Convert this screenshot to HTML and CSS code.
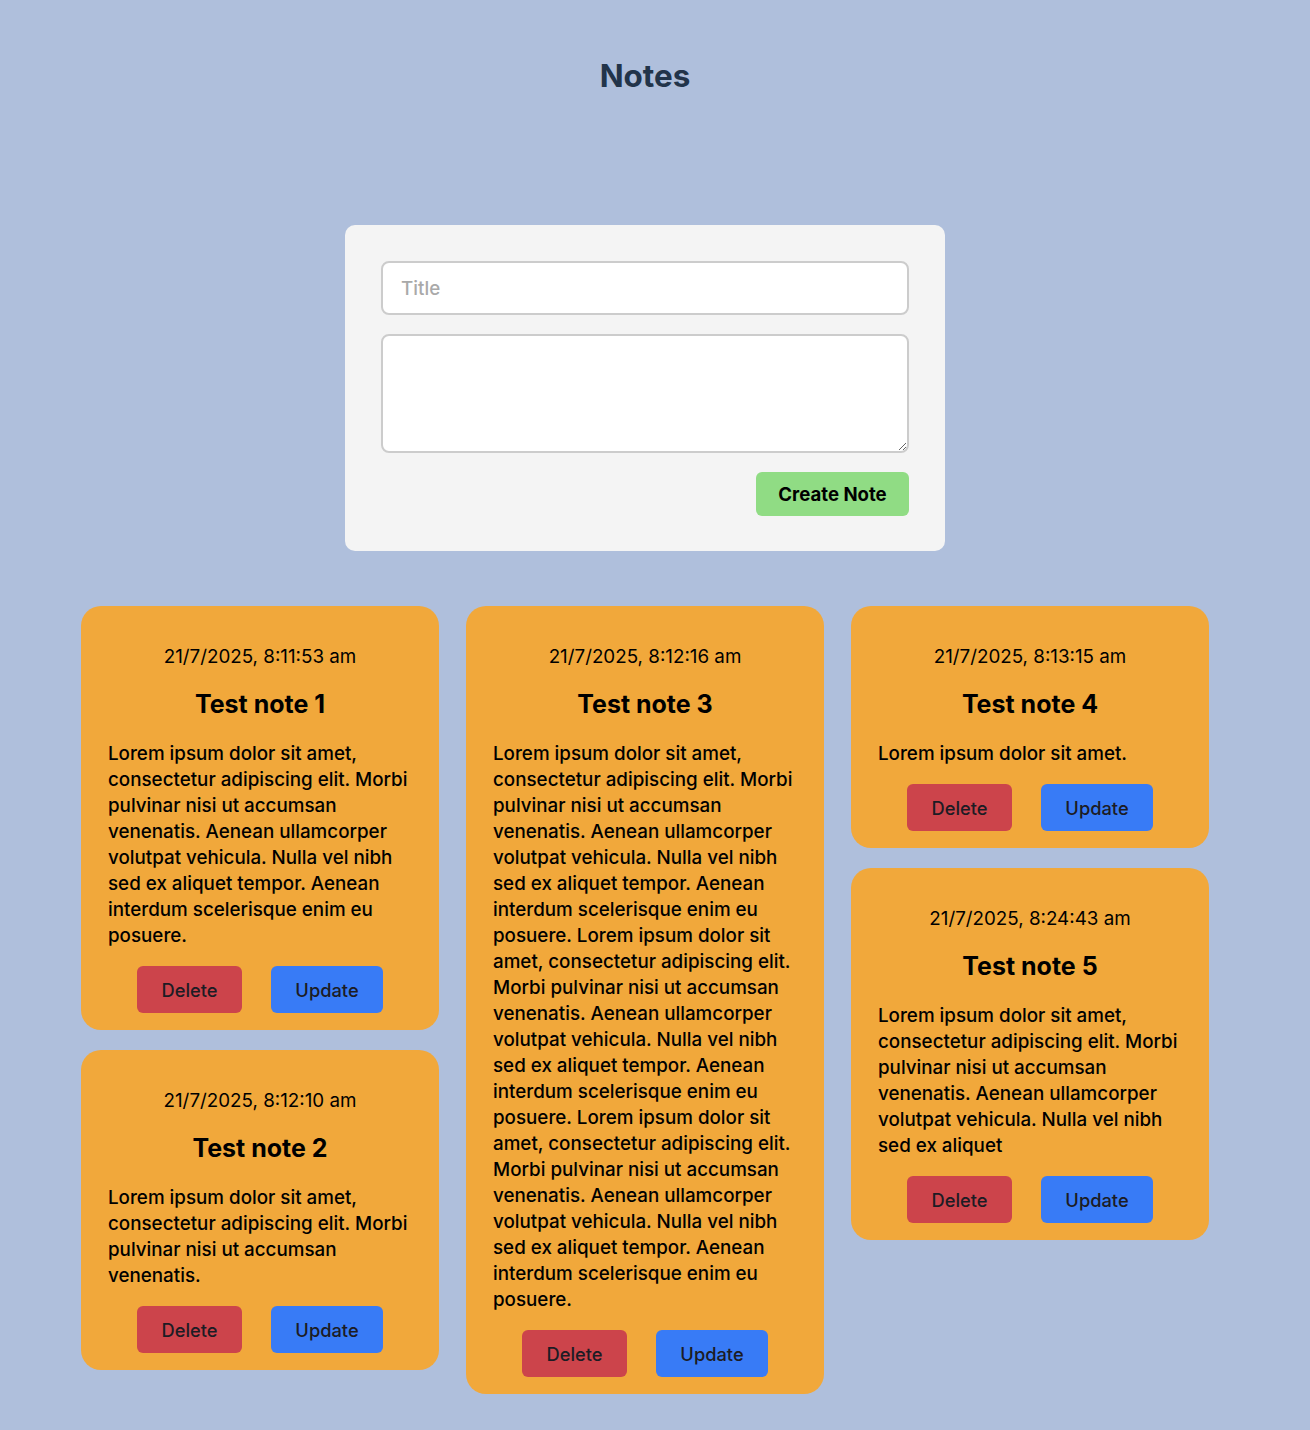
FILE: index.html
```html
<!DOCTYPE html>
<html lang="en">
<head>
<meta charset="utf-8">
<title>Notes</title>
<link rel="stylesheet" href="styles.css">
</head>
<body>
<div class="page">
  <h1 class="heading">Notes</h1>
  <form class="form-card">
    <input class="field" type="text" placeholder="Title">
    <textarea class="field area"></textarea>
    <div class="form-actions">
      <button type="button" class="btn-create">Create Note</button>
    </div>
  </form>
  <div class="board">
    <div class="col">
      <div class="note">
        <p class="date">21/7/2025, 8:11:53 am</p>
        <h2 class="note-title">Test note 1</h2>
        <p class="note-body">Lorem ipsum dolor sit amet, consectetur adipiscing elit. Morbi pulvinar nisi ut accumsan venenatis. Aenean ullamcorper volutpat vehicula. Nulla vel nibh sed ex aliquet tempor. Aenean interdum scelerisque enim eu posuere.</p>
        <div class="actions"><button class="btn del">Delete</button><button class="btn upd">Update</button></div>
      </div>
      <div class="note">
        <p class="date">21/7/2025, 8:12:10 am</p>
        <h2 class="note-title">Test note 2</h2>
        <p class="note-body">Lorem ipsum dolor sit amet, consectetur adipiscing elit. Morbi pulvinar nisi ut accumsan venenatis.</p>
        <div class="actions"><button class="btn del">Delete</button><button class="btn upd">Update</button></div>
      </div>
    </div>
    <div class="col">
      <div class="note">
        <p class="date">21/7/2025, 8:12:16 am</p>
        <h2 class="note-title">Test note 3</h2>
        <p class="note-body">Lorem ipsum dolor sit amet, consectetur adipiscing elit. Morbi pulvinar nisi ut accumsan venenatis. Aenean ullamcorper volutpat vehicula. Nulla vel nibh sed ex aliquet tempor. Aenean interdum scelerisque enim eu posuere. Lorem ipsum dolor sit amet, consectetur adipiscing elit. Morbi pulvinar nisi ut accumsan venenatis. Aenean ullamcorper volutpat vehicula. Nulla vel nibh sed ex aliquet tempor. Aenean interdum scelerisque enim eu posuere. Lorem ipsum dolor sit amet, consectetur adipiscing elit. Morbi pulvinar nisi ut accumsan venenatis. Aenean ullamcorper volutpat vehicula. Nulla vel nibh sed ex aliquet tempor. Aenean interdum scelerisque enim eu posuere.</p>
        <div class="actions"><button class="btn del">Delete</button><button class="btn upd">Update</button></div>
      </div>
    </div>
    <div class="col">
      <div class="note">
        <p class="date">21/7/2025, 8:13:15 am</p>
        <h2 class="note-title">Test note 4</h2>
        <p class="note-body">Lorem ipsum dolor sit amet.</p>
        <div class="actions"><button class="btn del">Delete</button><button class="btn upd">Update</button></div>
      </div>
      <div class="note">
        <p class="date">21/7/2025, 8:24:43 am</p>
        <h2 class="note-title">Test note 5</h2>
        <p class="note-body">Lorem ipsum dolor sit amet, consectetur adipiscing elit. Morbi pulvinar nisi ut accumsan venenatis. Aenean ullamcorper volutpat vehicula. Nulla vel nibh sed ex aliquet</p>
        <div class="actions"><button class="btn del">Delete</button><button class="btn upd">Update</button></div>
      </div>
    </div>
  </div>
</div>
</body>
</html>
```
FILE: styles.css
```css
* { box-sizing: border-box; }
html, body {
  margin: 0;
  background: #afbfdc;
  font-family: Inter, "Noto Sans", sans-serif;
  color: #000;
}
.page {
  width: 1290px;
  display: flex;
  flex-direction: column;
  align-items: center;
  padding-top: 57px;
  padding-bottom: 35px;
}
.heading {
  margin: 0;
  font-size: 31.4px;
  line-height: 38px;
  font-weight: 700;
  color: #22344a;
}
.form-card {
  margin-top: 130px;
  width: 600px;
  background: #f4f4f4;
  border-radius: 10px;
  padding: 36px 36px 35px;
  display: flex;
  flex-direction: column;
  gap: 19px;
}
.field {
  display: block;
  width: 100%;
  height: 54px;
  border: 2px solid #cccccc;
  border-radius: 8px;
  background: #fff;
  padding: 0 18px;
  font-family: Inter, "Noto Sans", sans-serif;
  font-size: 18.8px;
  font-weight: 500;
  color: #000;
  outline: none;
}
.field::placeholder { color: #a9a9a9; }
.area {
  height: 119px;
  padding: 12px 18px;
  resize: vertical;
}
.form-actions {
  display: flex;
  justify-content: flex-end;
}
.btn-create {
  width: 153px;
  height: 44px;
  border: none;
  border-radius: 6px;
  background: #90dc84;
  font-family: Inter, "Noto Sans", sans-serif;
  font-size: 18.6px;
  font-weight: 700;
  color: #000;
  padding: 0;
}
.board {
  margin-top: 55px;
  display: flex;
  gap: 27px;
  align-items: flex-start;
}
.col {
  width: 358px;
  display: flex;
  flex-direction: column;
  gap: 20px;
}
.note {
  background: #f1a83b;
  border-radius: 20px;
  padding: 41px 27px 17px;
}
.date {
  margin: 0;
  text-align: center;
  font-size: 18.8px;
  line-height: 20px;
  font-weight: 400;
}
.note-title {
  margin: 23px 0 0;
  text-align: center;
  font-size: 25px;
  line-height: 28px;
  font-weight: 700;
}
.note-body {
  margin: 23px 0 0;
  font-size: 18.8px;
  line-height: 26px;
  font-weight: 500;
}
.actions {
  margin-top: 17px;
  display: flex;
  justify-content: center;
  gap: 29px;
}
.btn {
  height: 47px;
  border: none;
  border-radius: 6px;
  padding: 0;
  font-family: Inter, "Noto Sans", sans-serif;
  font-size: 18.3px;
  font-weight: 500;
  color: #1c1c24;
}
.del { background: #cc444b; width: 105px; }
.upd { background: #387bf6; width: 112px; }
```
